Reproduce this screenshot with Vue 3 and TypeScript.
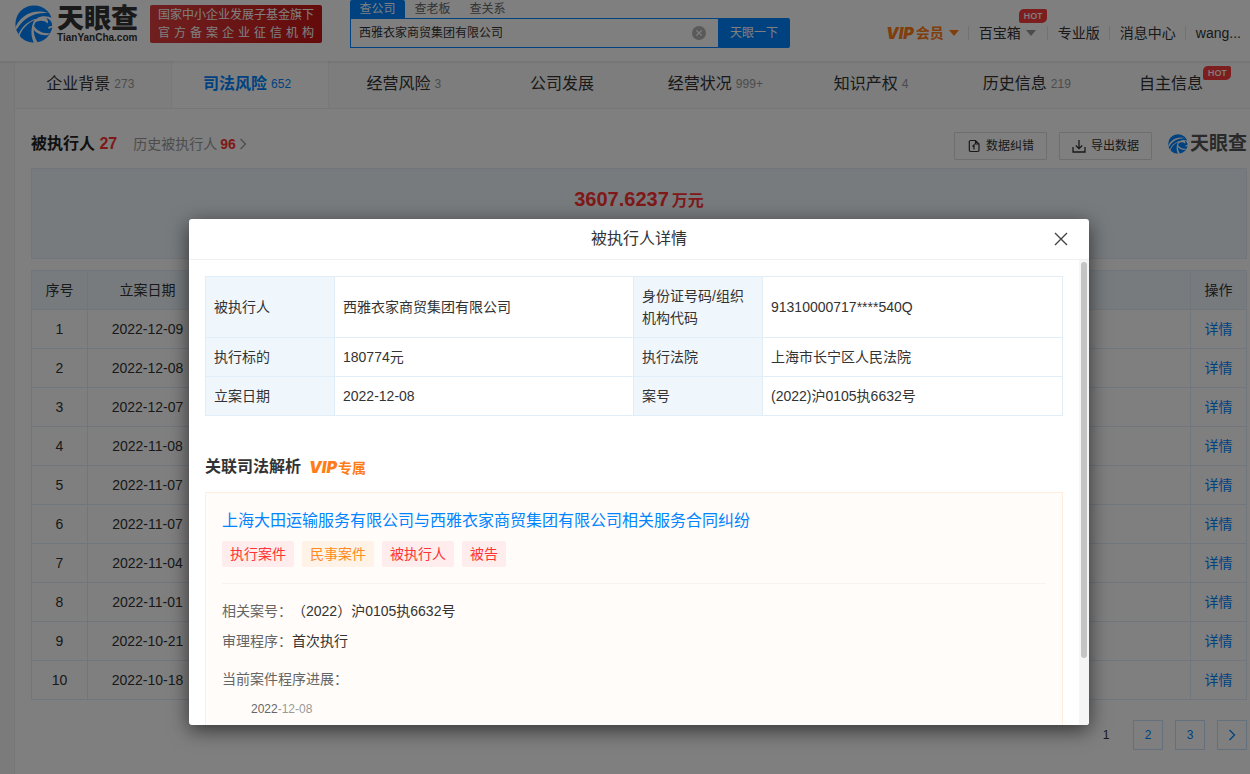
<script setup lang="ts">
import { ref } from 'vue'

interface Tab { name: string; count?: string; hot?: boolean }

const keyword = ref('西雅衣家商贸集团有限公司')
const searchTabs = ['查公司', '查老板', '查关系']
const tabs: Tab[] = [
  { name: '企业背景', count: '273' },
  { name: '司法风险', count: '652' },
  { name: '经营风险', count: '3' },
  { name: '公司发展' },
  { name: '经营状况', count: '999+' },
  { name: '知识产权', count: '4' },
  { name: '历史信息', count: '219' },
  { name: '自主信息', hot: true },
]
const dates = [
  '2022-12-09', '2022-12-08', '2022-12-07', '2022-11-08', '2022-11-07',
  '2022-11-07', '2022-11-04', '2022-11-01', '2022-10-21', '2022-10-18',
]
const details = [
  ['被执行人', '西雅衣家商贸集团有限公司', '身份证号码/组织机构代码', '91310000717****540Q'],
  ['执行标的', '180774元', '执行法院', '上海市长宁区人民法院'],
  ['立案日期', '2022-12-08', '案号', '(2022)沪0105执6632号'],
]
const tags = [
  { text: '执行案件', tone: 'red' },
  { text: '民事案件', tone: 'orange' },
  { text: '被执行人', tone: 'red' },
  { text: '被告', tone: 'red' },
]
</script>

<template>
  <div class="page">
    <svg class="defs" aria-hidden="true">
      <symbol id="swirl" viewBox="0 0 38 38">
        <circle cx="19" cy="19" r="18.6" fill="#0084ff" />
        <path d="M0 24C4 11 18 3 33 8C20 7 9 12 2 24Z" fill="#fff" />
        <path d="M39 14C31 9 20 11 18 19C23 15 29 15 32 18C34 20 34 22 33 24L39 22Z" fill="#fff" />
        <path d="M31 13C35 14 37.500 17 37 21C34 22 31 21 29 20C34 19 34 16 31 13Z" fill="#0084ff" />
        <path d="M22 14C18 20 17 29 23 38L19 38C15 30 16 21 20 14Z" fill="#fff" />
        <path d="M20 15C12 18 6 25 4 33L3 31C6 22 12 17 20 14Z" fill="#fff" />
        <path d="M18 20C22 26 28 29 35 28L33 30C26 31 20 28 17 22Z" fill="#fff" />
      </symbol>
    </svg>

    <header class="top">
      <a class="brand" href="#">
        <svg class="brand-mark"><use href="#swirl" /></svg>
        <span class="brand-words">
          <span class="brand-name">天眼查</span>
          <span class="brand-url">TianYanCha.com</span>
        </span>
      </a>
      <div class="slogan">
        <span>国家中小企业发展子基金旗下</span>
        <span>官方备案企业征信机构</span>
      </div>
      <form class="search" @submit.prevent>
        <div class="search-tabs">
          <button v-for="(t, i) in searchTabs" :key="t" type="button" :class="{ on: i === 0 }">{{ t }}</button>
        </div>
        <div class="search-row">
          <div class="search-box">
            <input v-model="keyword" type="text" aria-label="搜索公司" />
            <button class="clear" type="button" aria-label="清空" @click="keyword = ''">
              <svg viewBox="0 0 14 14"><circle cx="7" cy="7" r="7" fill="#b5b5b5" /><path d="M4.3 4.3l5.4 5.4M9.7 4.3l-5.4 5.4" stroke="#fff" stroke-width="1.2" /></svg>
            </button>
          </div>
          <button class="go" type="submit">天眼一下</button>
        </div>
      </form>
      <nav class="user-nav">
        <a href="#" class="vip"><em>VIP</em>会员<i class="caret"></i></a>
        <a href="#" class="toolbox">百宝箱<i class="caret grey"></i><b class="hot">HOT</b></a>
        <a href="#">专业版</a>
        <a href="#">消息中心</a>
        <a href="#">wang...</a>
      </nav>
    </header>

    <main class="card">
      <nav class="tabs">
        <a v-for="(t, i) in tabs" :key="t.name" href="#" :class="{ active: i === 1 }">
          <span>{{ t.name }}</span>
          <span v-if="t.count" class="count">{{ t.count }}</span>
          <b v-if="t.hot" class="hot">HOT</b>
        </a>
      </nav>

      <section class="content">
        <div class="section-head">
          <h2>被执行人 <span>27</span></h2>
          <a href="#" class="history">历史被执行人 <b>96</b>
            <svg viewBox="0 0 8 12"><path d="M1.5 1l5 5-5 5" fill="none" stroke="#999" stroke-width="1.3" /></svg>
          </a>
          <div class="actions">
            <button type="button">
              <svg viewBox="0 0 14 14"><path d="M5 12.500H3.500a1.200 1.200 0 0 1-1.200-1.200V2.700a1.200 1.200 0 0 1 1.200-1.200H8.500L12 5v6.300a1.200 1.200 0 0 1-1.200 1.200H5M8.500 1.500V5H12M7 10.500V6L5.500 7.500" fill="none" stroke="#333" stroke-width="1.200" /></svg>
              数据纠错
            </button>
            <button type="button">
              <svg viewBox="0 0 14 14"><path d="M7 1v8.500M3.800 6.500L7 9.700l3.200-3.200M1 8v5h12V8" fill="none" stroke="#333" stroke-width="1.300" /></svg>
              导出数据
            </button>
            <span class="mini-brand"><svg><use href="#swirl" /></svg>天眼查</span>
          </div>
        </div>

        <div class="total"><strong>3607.6237</strong><b>万元</b></div>

        <table class="list">
          <colgroup><col class="c-no" /><col class="c-date" /><col /><col class="c-op" /></colgroup>
          <thead>
            <tr><th>序号</th><th>立案日期</th><th></th><th>操作</th></tr>
          </thead>
          <tbody>
            <tr v-for="(d, i) in dates" :key="i">
              <td>{{ i + 1 }}</td><td>{{ d }}</td><td></td><td><a href="#">详情</a></td>
            </tr>
          </tbody>
        </table>

        <nav class="pager" aria-label="分页">
          <span>1</span>
          <a href="#">2</a>
          <a href="#">3</a>
          <a href="#" aria-label="下一页"><svg viewBox="0 0 8 12"><path d="M1.500 1l5 5-5 5" fill="none" stroke="#0084ff" stroke-width="1.300" /></svg></a>
        </nav>
      </section>
    </main>

    <div class="mask">
      <div class="dialog" role="dialog" aria-modal="true" aria-labelledby="dialog-title">
        <div class="dialog-head">
          <h3 id="dialog-title">被执行人详情</h3>
          <button type="button" aria-label="关闭">
            <svg viewBox="0 0 14 14"><path d="M1 1l12 12M13 1L1 13" stroke="#444" stroke-width="1.400" /></svg>
          </button>
        </div>
        <div class="dialog-main">
          <div class="dialog-body">
            <table class="detail">
              <colgroup><col class="k" /><col class="v" /><col class="k" /><col /></colgroup>
              <tbody>
                <tr v-for="r in details" :key="r[0]">
                  <th scope="row">{{ r[0] }}</th><td>{{ r[1] }}</td><th scope="row">{{ r[2] }}</th><td>{{ r[3] }}</td>
                </tr>
              </tbody>
            </table>

            <h4>关联司法解析 <span class="vip small"><em>VIP</em>专属</span></h4>

            <article class="case">
              <a href="#" class="case-title">上海大田运输服务有限公司与西雅衣家商贸集团有限公司相关服务合同纠纷</a>
              <div class="tags"><span v-for="t in tags" :key="t.text" :class="t.tone">{{ t.text }}</span></div>
              <dl>
                <div><dt>相关案号：</dt><dd>（2022）沪0105执6632号</dd></div>
                <div><dt>审理程序：</dt><dd>首次执行</dd></div>
              </dl>
              <p class="progress">当前案件程序进展：</p>
              <time>2022<span>-12-08</span></time>
            </article>
          </div>
          <div class="scroll-track"><div class="scroll-thumb"></div></div>
        </div>
      </div>
    </div>
  </div>
</template>

<style>
html,
body {
  overflow: hidden;
}
</style>

<style scoped>
* {
  box-sizing: border-box;
}
.page {
  min-width: 1278px;
  min-height: 100vh;
  background: #f6f6f6;
  color: #333;
  font: 14px/22px "Liberation Sans", "Noto Sans CJK SC", sans-serif;
}
.defs {
  position: absolute;
  width: 0;
  height: 0;
}
a {
  color: inherit;
  text-decoration: none;
}
button {
  margin: 0;
  padding: 0;
  border: 0;
  background: none;
  color: inherit;
  font: inherit;
  cursor: pointer;
}
h2,
h3,
h4,
p,
dl,
dd {
  margin: 0;
}
svg {
  display: block;
}
.top {
  position: relative;
  display: flex;
  height: 61px;
  padding: 0 37px 0 15px;
  background: #fff;
  box-shadow: 0 1px 3px rgba(0, 0, 0, 0.1);
}
.brand {
  display: flex;
  gap: 4px;
  height: 38px;
  margin-top: 5px;
}
.brand-mark {
  width: 38px;
  height: 38px;
}
.brand-words {
  display: flex;
  flex-direction: column;
  width: 81px;
  color: #333;
  font-weight: 900;
}
.brand-name {
  font-size: 27px;
  line-height: 29px;
}
.brand-url {
  font-family: "Liberation Sans", sans-serif;
  font-size: 10px;
  line-height: 8px;
}
.slogan {
  display: flex;
  flex-direction: column;
  width: 172px;
  height: 38px;
  margin: 5px 28px 0 12px;
  padding: 1px 8px;
  border-radius: 2px;
  background: linear-gradient(100deg, #e04040, #c81414);
  color: #fff;
  font-size: 12px;
  line-height: 18px;
}
.slogan span {
  text-align-last: justify;
  white-space: nowrap;
}
.search {
  width: 440px;
}
.search-tabs {
  display: flex;
  height: 18px;
}
.search-tabs button {
  width: 55px;
  color: #666;
  font-size: 12px;
  line-height: 18px;
}
.search-tabs .on {
  border-radius: 2px 2px 0 0;
  background: #0084ff;
  color: #fff;
}
.search-row {
  display: flex;
  height: 30px;
}
.search-box {
  display: flex;
  flex: 1;
  align-items: center;
  padding: 0 12px 0 8px;
  border: 1px solid #0084ff;
  border-right: 0;
}
.search-box input {
  flex: 1;
  min-width: 0;
  padding: 0;
  border: 0;
  outline: 0;
  background: none;
  color: #333;
  font: inherit;
  font-size: 12px;
}
.clear svg {
  width: 14px;
  height: 14px;
}
.go {
  width: 72px;
  border-radius: 0 2px 2px 0;
  background: #0084ff;
  color: #fff;
  font-size: 12px;
}
.user-nav {
  display: flex;
  align-items: center;
  height: 22px;
  margin: 22px 0 0 auto;
}
.user-nav > a {
  position: relative;
  display: flex;
  align-items: center;
  height: 14px;
  padding: 0 9px 0 10px;
  border-left: 1px solid #e5e5e5;
}
.user-nav > a:first-child {
  border-left: 0;
}
.user-nav > a:last-child {
  padding-right: 0;
}
.user-nav > .toolbox {
  padding-right: 11px;
}
.vip {
  color: #ff7d18;
  font-weight: 700;
}
.vip em {
  margin-right: 2px;
  font-family: Inter, sans-serif;
  font-size: 16px;
  font-weight: 900;
}
.vip.small {
  margin-left: 4px;
  font-size: 14px;
}
.vip.small em {
  margin-right: 1px;
}
.caret {
  margin-left: 5px;
  border: 5px solid transparent;
  border-top: 6px solid #ff7d18;
  border-bottom: 0;
}
.caret.grey {
  border-top-color: #999;
}
.hot {
  width: 28px;
  height: 14px;
  border-radius: 5px 2px;
  background: #fa3c3c;
  color: #fff;
  font: 600 9px/14px "Open Sans", sans-serif;
  text-align: center;
}
.toolbox .hot {
  position: absolute;
  top: -17px;
  right: 0;
}
.card {
  min-height: calc(100vh - 61px);
  margin: 0 15px;
  background: #fff;
  box-shadow: -1px 0 #eee;
}
.tabs {
  display: flex;
  height: 48px;
  border-bottom: 1px solid #eee;
  background: #fafafa;
}
.tabs a {
  display: flex;
  flex: 1;
  align-items: center;
  justify-content: center;
  gap: 4px;
  padding-bottom: 2px;
  font-size: 16px;
}
.tabs .active {
  background: #fff;
  border-left: 1px solid #f2f2f2;
  border-right: 1px solid #f2f2f2;
  color: #0084ff;
  font-weight: 700;
}
.count {
  margin-right: 5px;
  color: #999;
  font-size: 12px;
  font-weight: 400;
}
.active .count {
  color: #0084ff;
}
.tabs .hot {
  margin: 0 0 22px -4px;
}
.content {
  padding: 23px 16px;
}
.section-head {
  display: flex;
  height: 28px;
  margin-bottom: 8px;
}
.section-head h2 {
  color: #222;
  font-size: 16px;
  line-height: 24px;
}
.section-head h2 span,
.history b {
  color: #f33;
}
.history {
  display: flex;
  align-items: center;
  gap: 3px;
  height: 24px;
  margin-left: 16px;
  color: #999;
}
.history svg {
  width: 8px;
  height: 12px;
}
.actions {
  display: flex;
  gap: 12px;
  margin-left: auto;
}
.actions button {
  display: flex;
  align-items: center;
  gap: 5px;
  padding: 0 12px;
  border: 1px solid #ddd;
  border-radius: 1px;
  font-size: 12px;
}
.actions button svg {
  width: 14px;
  height: 14px;
}
.mini-brand {
  display: flex;
  gap: 2px;
  height: 24px;
  margin-left: 4px;
  align-items: center;
  color: #555;
  font-size: 19px;
  font-weight: 700;
}
.mini-brand svg {
  width: 20px;
  height: 20px;
}
.total {
  height: 91px;
  padding-top: 19px;
  border: 1px solid #e1edf7;
  background: #eff6fc;
  color: #f33;
  text-align: center;
}
.total strong {
  margin-right: 3px;
  font-size: 20px;
}
.total b {
  font-size: 16px;
}
table {
  width: 100%;
  border-collapse: collapse;
  table-layout: fixed;
}
th {
  background: #eff6fc;
  font-weight: 400;
}
th,
td {
  padding: 8px;
  border: 1px solid #e1edf7;
}
.list {
  margin-top: 11px;
  text-align: center;
}
.list th,
.list td {
  padding: 8px 0;
}
.c-no {
  width: 56px;
}
.c-date {
  width: 120px;
}
.c-op {
  width: 56px;
}
.list a,
.pager a {
  color: #0084ff;
}
.pager {
  display: flex;
  justify-content: flex-end;
  gap: 12px;
  margin-top: 20px;
  font-size: 12px;
}
.pager > * {
  display: flex;
  align-items: center;
  justify-content: center;
  width: 30px;
  height: 30px;
}
.pager a {
  border: 1px solid #c8e0f8;
}
.pager svg {
  width: 8px;
  height: 12px;
}
.mask {
  position: absolute;
  inset: 0;
  min-width: 1278px;
  padding-top: 219px;
  background: rgba(0, 0, 0, 0.5);
}
.dialog {
  display: flex;
  flex-direction: column;
  width: 900px;
  height: calc(100vh - 268px);
  margin: 0 auto;
  overflow: hidden;
  border-radius: 3px;
  background: #fff;
  box-shadow: 0 5px 20px rgba(0, 0, 0, 0.6);
}
.dialog-head {
  display: flex;
  flex: none;
  align-items: center;
  height: 41px;
  padding: 0 21px;
  border-bottom: 1px solid #f0f0f0;
}
.dialog-head h3 {
  flex: 1;
  padding-left: 14px;
  font-size: 16px;
  font-weight: 400;
  text-align: center;
}
.dialog-head svg {
  width: 14px;
  height: 14px;
}
.dialog-main {
  display: flex;
  flex: 1;
  min-height: 0;
}
.dialog-body {
  flex: 1;
  overflow: hidden;
  padding: 16px 16px 0;
}
.scroll-track {
  width: 10px;
  padding: 2px;
  background: #f5f5f5;
}
.scroll-thumb {
  height: 86%;
  border-radius: 3px;
  background: #c4c4c4;
}
.detail th,
.detail td {
  text-align: left;
}
.detail .k {
  width: 129px;
}
.detail .v {
  width: 299px;
}
.dialog h4 {
  display: flex;
  align-items: center;
  gap: 4px;
  height: 24px;
  margin: 39px 0 13px;
  font-size: 16px;
}
.case {
  height: 400px;
  padding: 16px;
  border: 1px solid #ffeee0;
  background: #fffcf9;
}
.case-title {
  display: block;
  color: #0084ff;
  font-size: 16px;
  line-height: 24px;
}
.tags {
  display: flex;
  gap: 8px;
  margin-bottom: 12px;
  padding: 8px 0 16px;
  border-bottom: 1px solid #f7f3f1;
}
.tags span {
  padding: 2px 8px;
  border-radius: 2px;
}
.red {
  background: #ffeded;
  color: #f33;
}
.orange {
  background: #fff3e8;
  color: #ff8a1e;
}
.case dl div {
  display: flex;
  line-height: 30px;
}
.case dt,
.progress {
  color: #666;
}
.progress {
  margin-top: 12px;
}
.case time {
  display: block;
  margin: 8px 0 0 29px;
  color: #666;
  font-size: 12px;
}
.case time span {
  color: #999;
}
</style>
